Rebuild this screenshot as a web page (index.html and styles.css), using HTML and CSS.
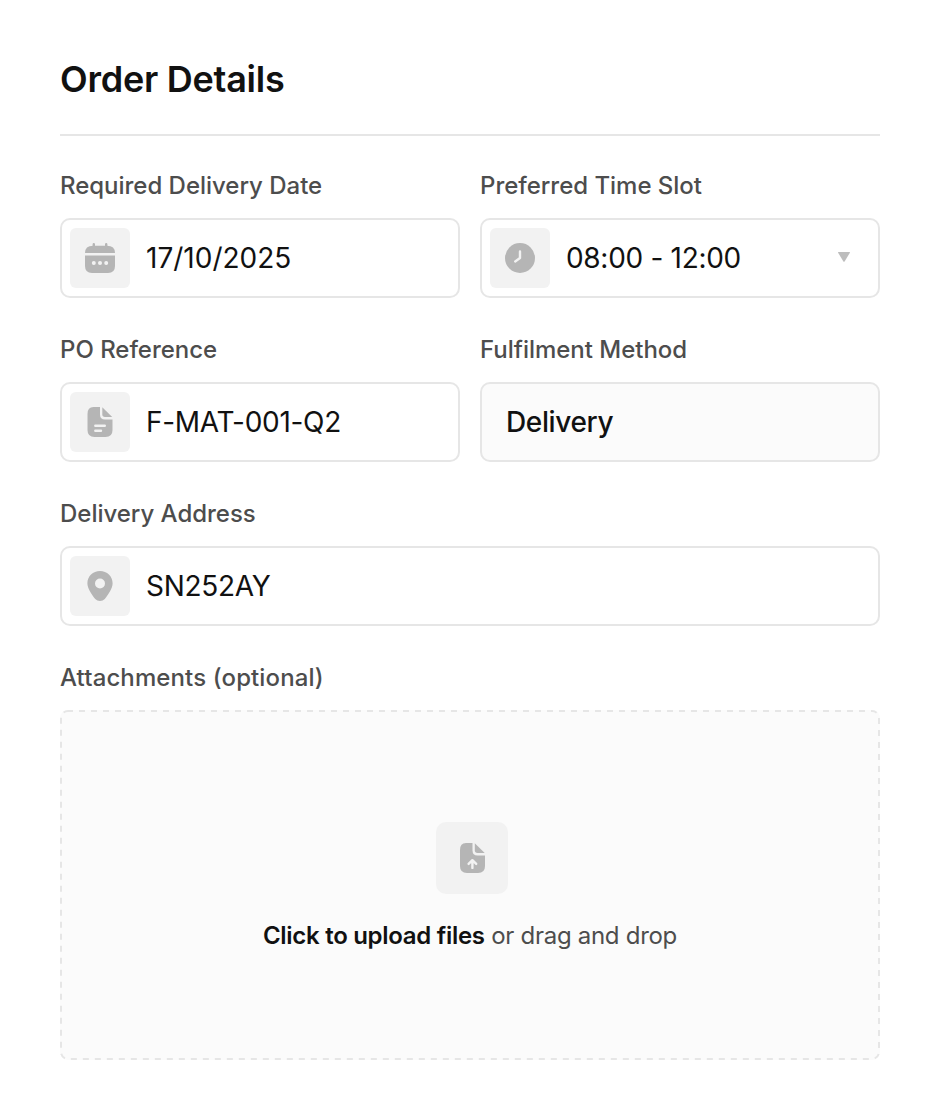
FILE: index.html
```html
<!DOCTYPE html>
<html lang="en">
<head>
    <meta charset="UTF-8">
    <meta name="viewport" content="width=device-width, initial-scale=1.0">
    <title>Order Details</title>
    <link rel="stylesheet" href="styles.css">
</head>
<body>

    <h1>Order Details</h1>

    <form class="order-form">
        <div class="field">
            <label for="deliveryDate">Required Delivery Date</label>
            <div class="control">
                <span class="icon-box">
                    <svg class="icon" viewBox="0 0 30 30">
                        <path d="M0 10Q0 2.700 8 2.700h14q8 0 8 7.300z"/>
                        <path d="M0 12.400h30V23q0 7-7 7H7q-7 0-7-7z"/>
                        <path class="pegs" d="M8.800 1.200V5M21.200 1.200V5"/>
                        <g class="cutout-fill">
                            <circle cx="8.800" cy="20" r="2"/>
                            <circle cx="15" cy="20" r="2"/>
                            <circle cx="21.200" cy="20" r="2"/>
                        </g>
                    </svg>
                </span>
                <input type="text" id="deliveryDate" class="date" value="17/10/2025">
            </div>
        </div>

        <div class="field">
            <label for="timeSlot">Preferred Time Slot</label>
            <div class="control">
                <span class="icon-box">
                    <svg class="icon" viewBox="0 0 30 30">
                        <circle cx="15" cy="15" r="15"/>
                        <path class="cutout-line" d="M15 8.500V15l-4.800 3.400"/>
                    </svg>
                </span>
                <input type="text" id="timeSlot" value="08:00 - 12:00" readonly>
                <svg class="arrow" viewBox="0 0 12 10">
                    <path d="M.6 0h10.800q.8 0 .5.700L6.600 9.400q-.6.800-1.200 0L.1.700Q-.2 0 .6 0z"/>
                </svg>
            </div>
        </div>

        <div class="field">
            <label for="poReference">PO Reference</label>
            <div class="control">
                <span class="icon-box">
                    <svg class="icon" viewBox="0 0 30 30">
                        <path d="M8.500 0H15v7.500q0 5 5 5h7.500V23q0 7-7 7h-11q-7 0-7-7V7q0-7 6-7z"/>
                        <path d="M17.300.3L27.200 10H20q-2.700 0-2.700-2.700z"/>
                        <path class="cutout-line" d="M10.300 18.700h9.500M10.300 23.700h5.700"/>
                    </svg>
                </span>
                <input type="text" id="poReference" value="F-MAT-001-Q2">
            </div>
        </div>

        <div class="field">
            <label for="fulfilment">Fulfilment Method</label>
            <div class="control control-static">
                <input type="text" id="fulfilment" value="Delivery" readonly>
            </div>
        </div>

        <div class="field field-wide">
            <label for="address">Delivery Address</label>
            <div class="control">
                <span class="icon-box">
                    <svg class="icon" viewBox="0 0 30 30">
                        <path fill-rule="evenodd" d="M15 0C22 0 27.600 5.400 27.600 12.300c0 5.200-4.200 11.200-7.800 15.600q-2 2.100-4.800 2.100t-4.800-2.100C6.600 23.500 2.400 17.500 2.400 12.300 2.400 5.400 8 0 15 0zm0 7.500a5 5 0 1 0 0 10 5 5 0 0 0 0-10z"/>
                    </svg>
                </span>
                <input type="text" id="address" value="SN252AY">
            </div>
        </div>

        <div class="field field-wide">
            <span class="label attachments-label">Attachments (optional)</span>
            <div class="dropzone">
                <svg class="dropzone-border">
                    <rect x="1" y="1" width="818" height="348" rx="7"/>
                </svg>
                <span class="icon-box icon-box-large">
                    <svg class="icon" viewBox="0 0 30 30">
                        <path d="M9 0h6.500v7.500q0 5 5 5H28V23q0 7-7 7H10q-7 0-7-7V7q0-7 6-7z"/>
                        <path d="M17.800.3L27.700 10h-7.200q-2.700 0-2.700-2.700z"/>
                        <path class="cutout-line" d="M15.400 24.900v-7.400M11.600 20.900l3.800-3.700 3.800 3.700"/>
                    </svg>
                </span>
                <p><strong>Click to upload files</strong> or drag and drop</p>
            </div>
        </div>
    </form>

</body>
</html>
```
FILE: styles.css
```css
:root {
    --text: #111111;
    --label: #4d4d4d;
    --border: #e6e6e6;
    --surface: #fbfbfb;
    --icon-bg: #f2f2f2;
    --icon: #b5b5b5;
}

* {
    box-sizing: border-box;
    margin: 0;
    padding: 0;
}

body {
    font-family: 'Inter', sans-serif;
    background: #ffffff;
    color: var(--text);
    padding: 59px 60px 60px;
}

h1 {
    height: 77px;
    margin-bottom: 36px;
    font-size: 36px;
    font-weight: 600;
    line-height: 40px;
    letter-spacing: -0.25px;
    border-bottom: 2px solid var(--border);
}

.order-form {
    display: grid;
    grid-template-columns: repeat(2, minmax(0, 1fr));
    gap: 38px 20px;
}

.field {
    display: flex;
    flex-direction: column;
    gap: 18px;
}

.field-wide {
    grid-column: 1 / -1;
}

label,
.label {
    font-size: 24px;
    font-weight: 500;
    line-height: 28px;
    letter-spacing: -0.02px;
    color: var(--label);
}

.attachments-label {
    letter-spacing: 0.12px;
}

.control {
    display: flex;
    align-items: center;
    gap: 16px;
    height: 80px;
    padding: 8px;
    border: 2px solid var(--border);
    border-radius: 10px;
}

.control-static {
    padding: 8px 24px;
    background: var(--surface);
}

input {
    flex: 1;
    min-width: 0;
    font-family: inherit;
    font-size: 28px;
    letter-spacing: -0.011em;
    color: var(--text);
    background: none;
    border: none;
    outline: none;
}

.control-static input {
    font-weight: 500;
    letter-spacing: -0.013em;
}

.date {
    letter-spacing: 0;
}

/* Icons */
.icon-box {
    display: flex;
    justify-content: center;
    align-items: center;
    flex-shrink: 0;
    width: 60px;
    height: 60px;
    background: var(--icon-bg);
    border-radius: 6px;
}

.icon-box-large {
    width: 72px;
    height: 72px;
    margin-left: 4px;
    border-radius: 10px;
}

.icon {
    width: 30px;
    height: 30px;
    fill: var(--icon);
}

.pegs {
    stroke: var(--icon);
    stroke-width: 2.4;
    stroke-linecap: round;
}

.cutout-fill {
    fill: var(--icon-bg);
}

.cutout-line {
    fill: none;
    stroke: var(--icon-bg);
    stroke-width: 2.4;
    stroke-linecap: round;
    stroke-linejoin: round;
}

.arrow {
    width: 12px;
    height: 10px;
    margin: 0 20px 3px 0;
    fill: #bdbdbd;
}

/* Upload area */
.dropzone {
    position: relative;
    display: flex;
    flex-direction: column;
    align-items: center;
    gap: 28px;
    height: 350px;
    padding-top: 112px;
    background: var(--surface);
    border-radius: 8px;
}

.dropzone-border {
    position: absolute;
    inset: 0;
    width: 100%;
    height: 100%;
    fill: none;
    stroke: var(--border);
    stroke-width: 2;
    stroke-dasharray: 6 6;
    stroke-dashoffset: 1;
}

.dropzone p {
    font-size: 24px;
    line-height: 28px;
    letter-spacing: -0.012em;
    color: var(--label);
}

.dropzone strong {
    font-weight: 600;
    color: var(--text);
}
```
